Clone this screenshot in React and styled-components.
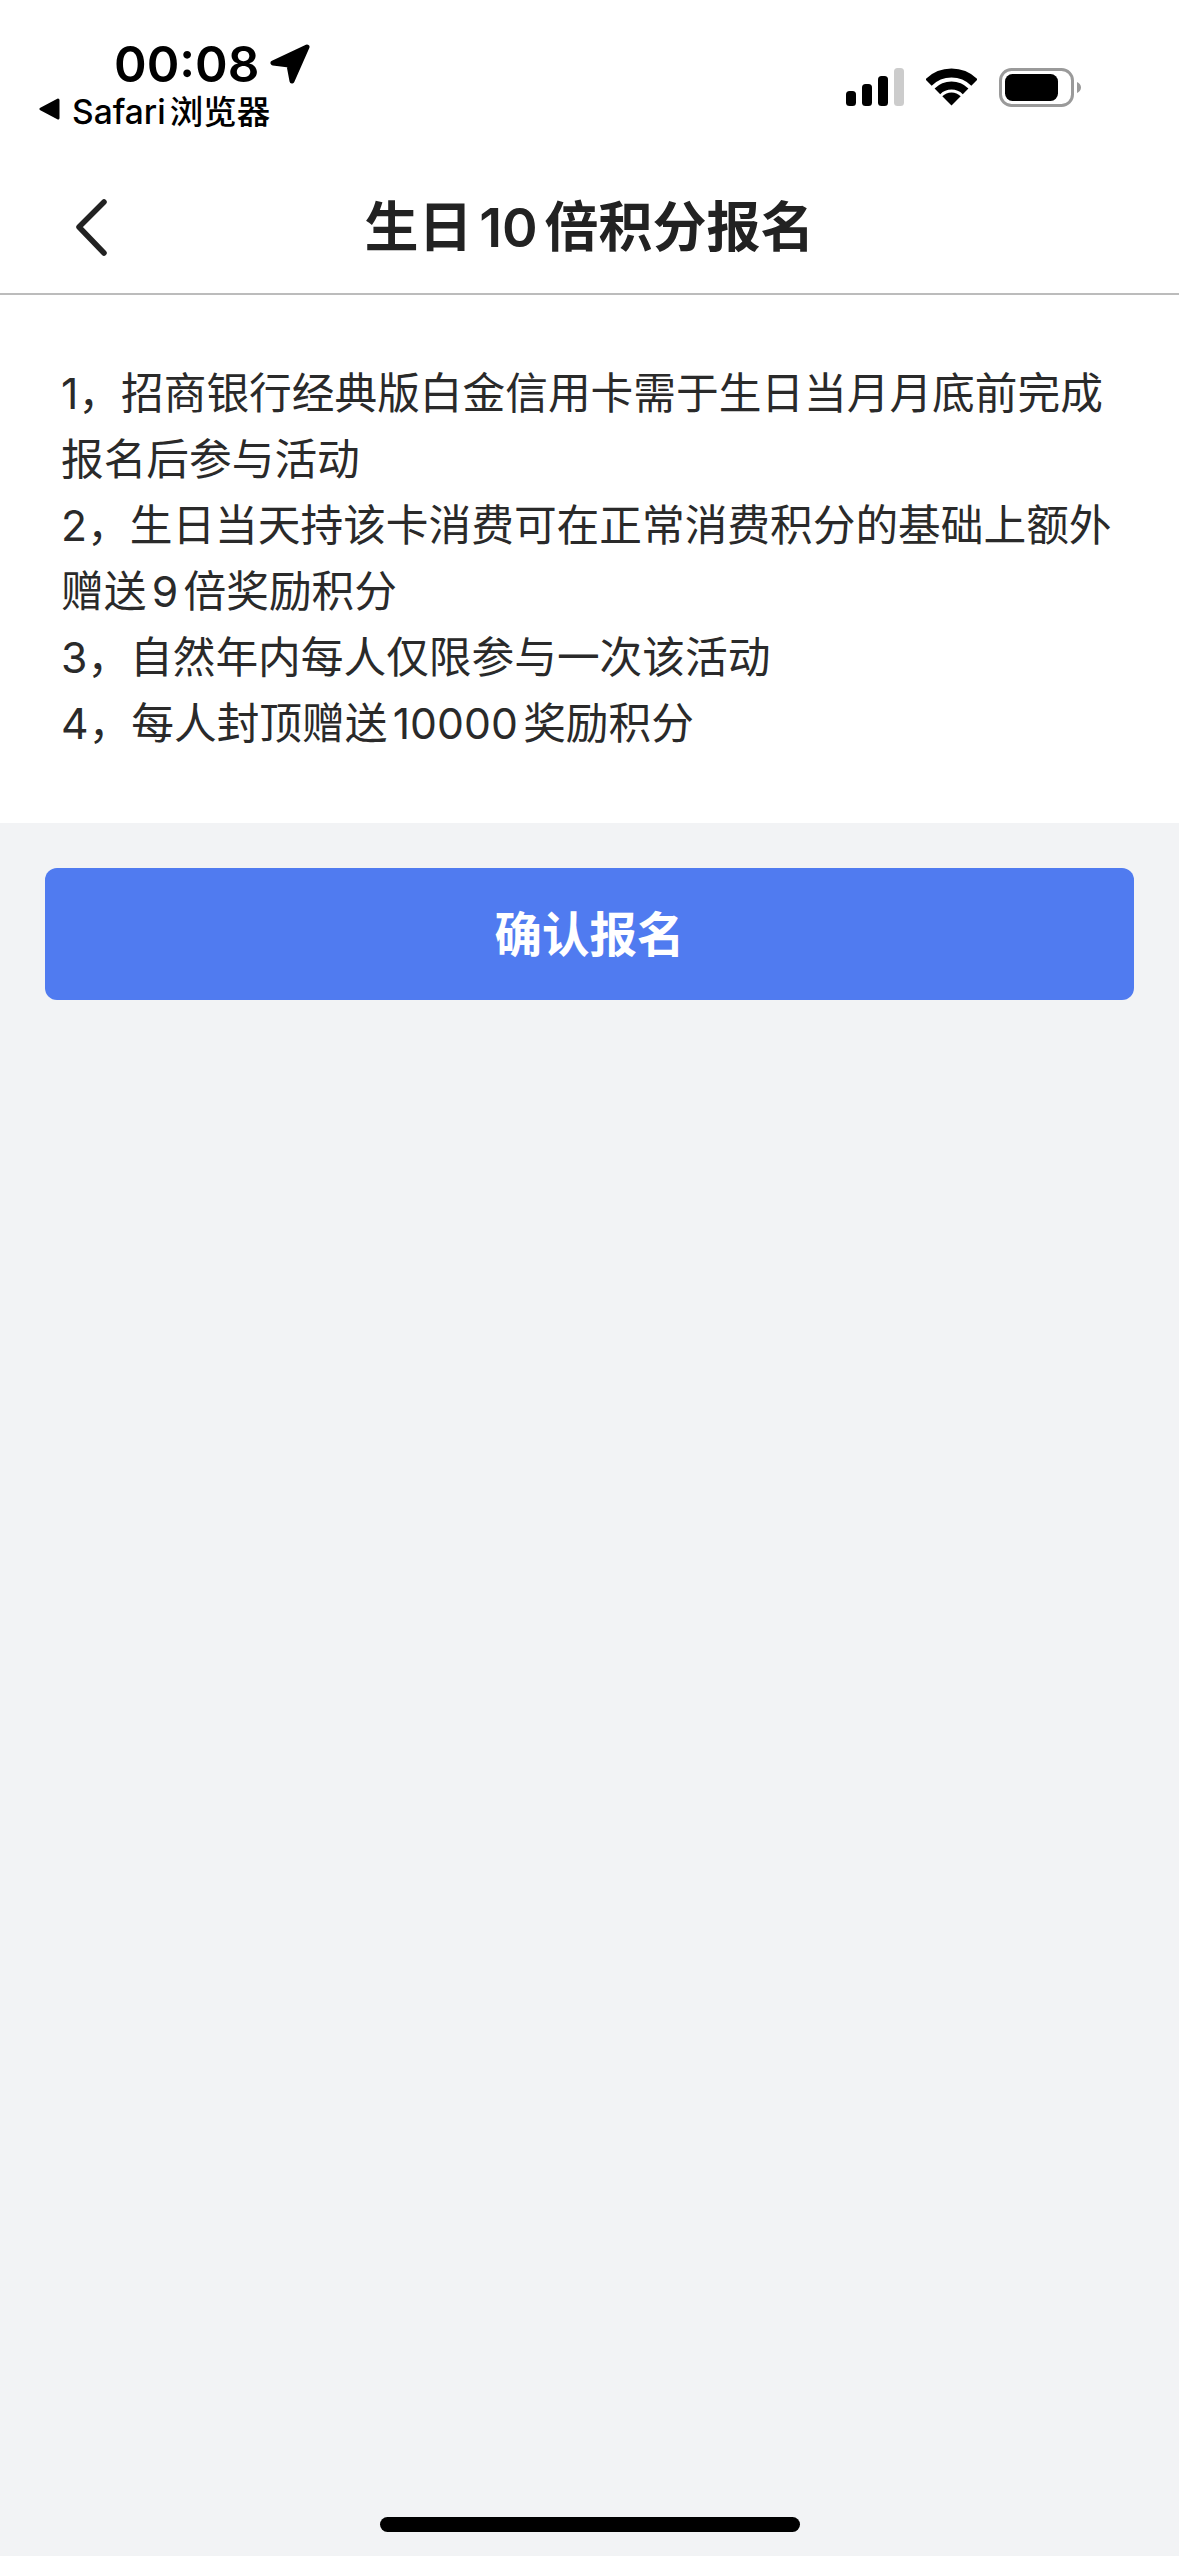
import React from "react";
import styled, { createGlobalStyle } from "styled-components";

const GlobalStyle = createGlobalStyle`
  html, body {
    margin: 0;
    padding: 0;
    background: #f2f3f5;
  }
  * {
    box-sizing: border-box;
  }
`;

const Page = styled.div`
  width: 1179px;
  height: 2556px;
  display: flex;
  flex-direction: column;
  background: #f2f3f5;
  color: #222;
  font-family: Inter, "Noto Sans CJK SC", sans-serif;
  text-autospace: normal;
`;

const StatusBar = styled.div`
  height: 162px;
  padding: 0 98px 0 39px;
  display: flex;
  justify-content: space-between;
  align-items: flex-start;
  background: #fff;
  color: #000;
`;

const StatusLeft = styled.div`
  padding-top: 40px;
  display: flex;
  flex-direction: column;
`;

const TimeRow = styled.div`
  margin-left: 75px;
  height: 47px;
  display: flex;
  align-items: center;
  gap: 11px;
  font-size: 49.5px;
  font-weight: 600;
`;

const BackRow = styled.div`
  height: 44px;
  display: flex;
  align-items: center;
  gap: 12px;
  font-size: 33.5px;
  font-weight: 500;
`;

const StatusIcons = styled.div`
  padding-top: 68px;
  display: flex;
  align-items: flex-start;
  gap: 22px;
`;

const NavBar = styled.div`
  height: 133px;
  position: relative;
  display: flex;
  align-items: center;
  justify-content: center;
  background: #fff;
  border-bottom: 2px solid #bcbcbc;
`;

const BackButton = styled.button`
  position: absolute;
  left: 75px;
  top: 36px;
  padding: 0;
  border: 0;
  background: none;
  display: flex;
`;

const Title = styled.h1`
  margin: 0;
  font-size: 54px;
  font-weight: 600;
  line-height: 1;
  color: #222;
`;

const Rules = styled.div`
  padding: 66px 45px 66px 61px;
  background: #fff;
`;

const Rule = styled.p`
  margin: 0;
  font-size: 42.7px;
  line-height: 66px;
  color: #2a2a2a;
`;

const Actions = styled.div`
  padding: 45px 45px 0;
`;

const ConfirmButton = styled.button`
  width: 100%;
  height: 132px;
  padding: 0 0 5px;
  border: 0;
  border-radius: 12px;
  background: #507bf0;
  color: #fff;
  font-family: inherit;
  font-size: 47.5px;
  font-weight: 600;
`;

const HomeBar = styled.div`
  width: 420px;
  height: 15px;
  margin: auto auto 24px;
  border-radius: 8px;
  background: #000;
`;

const rules = [
  "1，招商银行经典版白金信用卡需于生日当月月底前完成报名后参与活动",
  "2，生日当天持该卡消费可在正常消费积分的基础上额外赠送9倍奖励积分",
  "3，自然年内每人仅限参与一次该活动",
  "4，每人封顶赠送10000奖励积分",
];

const LocationIcon = () => (
  <svg width="40" height="40" viewBox="0 0 40 40">
    <path
      d="M37 3 L3 19 L19 21 L22 37 Z"
      fill="#000"
      stroke="#000"
      strokeWidth="5"
      strokeLinejoin="round"
    />
  </svg>
);

const BackTriangle = () => (
  <svg width="21" height="22" viewBox="0 0 21 22">
    <path d="M19 2 L2 11 L19 20 Z" fill="#000" stroke="#000" strokeWidth="3" strokeLinejoin="round" />
  </svg>
);

const SignalIcon = () => (
  <svg width="58" height="38" viewBox="0 0 58 38">
    <rect x="0" y="23" width="10" height="15" rx="3.5" fill="#000" />
    <rect x="16" y="16" width="10" height="22" rx="3.5" fill="#000" />
    <rect x="32" y="8" width="10" height="30" rx="3.5" fill="#000" />
    <rect x="48" y="0" width="10" height="38" rx="3.5" fill="#ccc" />
  </svg>
);

const WifiIcon = () => (
  <svg width="51" height="38" viewBox="0 0 51 37">
    <path d="M2.5 14 A32.5 32.5 0 0 1 48.5 14" fill="none" stroke="#000" strokeWidth="9" />
    <path d="M11.4 22.9 A20 20 0 0 1 39.6 22.9" fill="none" stroke="#000" strokeWidth="8" />
    <path d="M25.5 37 L16.3 27.8 A13 13 0 0 1 34.7 27.8 Z" fill="#000" />
  </svg>
);

const BatteryIcon = () => (
  <svg width="82" height="39" viewBox="0 0 82 39">
    <rect x="1.5" y="1.5" width="72" height="36" rx="11" fill="none" stroke="#9a9a9a" strokeWidth="3" />
    <rect x="6" y="6" width="53" height="27" rx="7.5" fill="#000" />
    <path d="M78 14 C80.5 15 82 17 82 19.5 C82 22 80.5 24 78 25 Z" fill="#9a9a9a" />
  </svg>
);

const ChevronIcon = () => (
  <svg width="32" height="60" viewBox="0 0 32 60">
    <path
      d="M29 4 L4 29 L29 55"
      fill="none"
      stroke="#222"
      strokeWidth="5.5"
      strokeLinecap="round"
      strokeLinejoin="round"
    />
  </svg>
);

export default function App() {
  return (
    <>
      <GlobalStyle />
      <Page>
        <StatusBar>
          <StatusLeft>
            <TimeRow>
              00:08
              <LocationIcon />
            </TimeRow>
            <BackRow>
              <BackTriangle />
              Safari浏览器
            </BackRow>
          </StatusLeft>
          <StatusIcons>
            <SignalIcon />
            <WifiIcon />
            <BatteryIcon />
          </StatusIcons>
        </StatusBar>
        <NavBar>
          <BackButton aria-label="返回">
            <ChevronIcon />
          </BackButton>
          <Title>生日10倍积分报名</Title>
        </NavBar>
        <Rules>
          {rules.map((rule) => (
            <Rule key={rule}>{rule}</Rule>
          ))}
        </Rules>
        <Actions>
          <ConfirmButton>确认报名</ConfirmButton>
        </Actions>
        <HomeBar />
      </Page>
    </>
  );
}
